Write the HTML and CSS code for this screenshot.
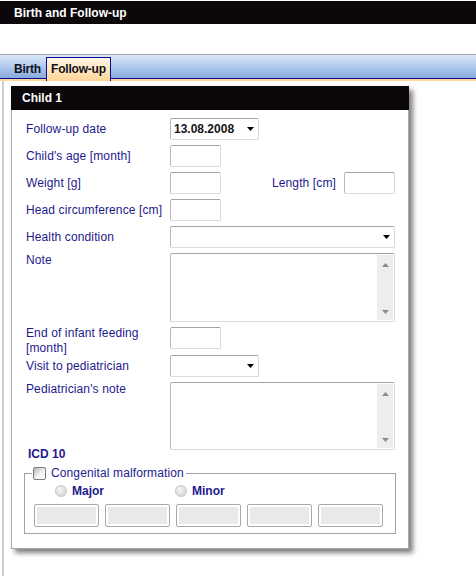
FILE: index.html
```html
<!DOCTYPE html>
<html lang="en">
<head>
    <meta charset="UTF-8">
    <meta name="viewport" content="width=device-width, initial-scale=1.0">
    <title>Birth and Follow-up</title>
    <link rel="stylesheet" href="styles.css">
</head>
<body>
    <div class="titlebar">Birth and Follow-up</div>
    <div class="toolbar"></div>
    <div class="tabbar">
        <span class="tab">Birth</span>
        <span class="tab active">Follow-up</span>
    </div>
    <div class="tabline"></div>

    <div class="content">
        <div class="panel">
            <div class="panel-head">Child 1</div>
            <div class="panel-body">
                <div class="form">
                    <label>Follow-up date</label>
                    <div class="select short">
                        <span class="value">13.08.2008</span>
                        <svg class="arrow" width="7" height="4" viewBox="0 0 7 4"><path d="M0 0h7L3.5 4z"/></svg>
                    </div>

                    <label>Child's age [month]</label>
                    <div><div class="input"></div></div>

                    <label>Weight [g]</label>
                    <div class="pair">
                        <div class="input"></div>
                        <div class="pair-right">
                            <label>Length [cm]</label>
                            <div class="input"></div>
                        </div>
                    </div>

                    <label>Head circumference [cm]</label>
                    <div><div class="input"></div></div>

                    <label>Health condition</label>
                    <div class="select">
                        <span class="value"></span>
                        <svg class="arrow" width="7" height="4" viewBox="0 0 7 4"><path d="M0 0h7L3.5 4z"/></svg>
                    </div>

                    <label class="top">Note</label>
                    <div class="textarea tall">
                        <div class="scroll">
                            <svg width="7" height="4" viewBox="0 0 7 4"><path d="M0 4h7L3.5 0z"/></svg>
                            <svg width="7" height="4" viewBox="0 0 7 4"><path d="M0 0h7L3.5 4z"/></svg>
                        </div>
                    </div>

                    <label class="top two-line">End of infant feeding [month]</label>
                    <div class="input-cell"><div class="input"></div></div>

                    <label>Visit to pediatrician</label>
                    <div class="select short">
                        <span class="value"></span>
                        <svg class="arrow" width="7" height="4" viewBox="0 0 7 4"><path d="M0 0h7L3.5 4z"/></svg>
                    </div>

                    <label class="top">Pediatrician's note</label>
                    <div class="textarea">
                        <div class="scroll">
                            <svg width="7" height="4" viewBox="0 0 7 4"><path d="M0 4h7L3.5 0z"/></svg>
                            <svg width="7" height="4" viewBox="0 0 7 4"><path d="M0 0h7L3.5 4z"/></svg>
                        </div>
                    </div>
                </div>

                <div class="section-title">ICD 10</div>
                <fieldset class="group">
                    <legend><span class="checkbox"></span>Congenital malformation</legend>
                    <div class="radios">
                        <span class="radio-item"><span class="radio"></span>Major</span>
                        <span class="radio-item"><span class="radio"></span>Minor</span>
                    </div>
                    <div class="codes">
                        <div class="code"></div>
                        <div class="code"></div>
                        <div class="code"></div>
                        <div class="code"></div>
                        <div class="code"></div>
                    </div>
                </fieldset>
            </div>
        </div>
    </div>
</body>
</html>
```

FILE: styles.css
```css
* { box-sizing: border-box; }
body { margin: 0; font: 12px "Liberation Sans", Arial, sans-serif; color: #1d1a8c; background: #fff; overflow: hidden; }

/* window header + tabs */
.titlebar { margin-top: 1px; height: 23px; line-height: 24px; padding-left: 14px; background: #0b070a; color: #fff; font-weight: bold; }
.toolbar { height: 31px; border-bottom: 1px solid #a5a5a5; }
.tabbar { display: flex; align-items: flex-end; height: 24px; padding-left: 8px; background: linear-gradient(#dce9fa, #86aadf); border-bottom: 1px solid #0c0c90; }
.tabline { height: 2px; background: #ffd89c; }
.tab { position: relative; height: 24px; margin-bottom: -3px; padding: 0 4px 0 5px; line-height: 23px; font-weight: bold; color: #101018; letter-spacing: -0.2px; border: 1px solid transparent; border-bottom: 0; }
.tab.active { padding: 0 4px; border-color: #0c0c90; background: linear-gradient(#fff6e8, #ffd596); }

.content { height: 495px; margin-left: 2px; border-left: 2px solid #cfcfcf; padding: 5px 0 0 7px; }

/* child panel */
.panel { width: 398px; box-shadow: 4px 4px 5px rgba(0, 0, 0, .5); }
.panel-head { height: 24px; line-height: 24px; padding-left: 11px; background: #0b070a; color: #fff; font-weight: bold; }
.panel-body { background: #fff; border: 1px solid #a8a8a8; border-top: 0; padding: 8px 13px 14px 14px; }

.form { display: grid; grid-template-columns: 144px 225px; row-gap: 5px; align-items: center; }
.form label { line-height: 15px; letter-spacing: 0.12px; }
.form label.top { align-self: start; }
.form label.two-line { margin: -1px 0 -6px; padding-right: 10px; }
.input-cell { align-self: start; }

.input { width: 51px; height: 22px; border: 1px solid; border-color: #a4a4a4 #d6dbe2 #d6dbe2 #b9b9b9; border-radius: 2px; background: #fff; }
.pair { display: flex; justify-content: space-between; align-items: center; }
.pair-right { display: flex; align-items: center; gap: 8px; }

.select { display: flex; align-items: center; justify-content: space-between; height: 22px; padding: 0 4px 0 3px; border: 1px solid; border-color: #a4a4a4 #d6dbe2 #d6dbe2 #b9b9b9; border-radius: 2px; }
.select.short { width: 89px; }
.select .value { font-weight: bold; color: #151515; }
.select .arrow { fill: #000; }

.textarea { display: flex; justify-content: flex-end; height: 68px; padding: 1px; border: 1px solid; border-color: #a4a4a4 #d6dbe2 #d6dbe2 #b9b9b9; border-radius: 2px; }
.textarea.tall { height: 69px; }
.scroll { display: flex; flex-direction: column; justify-content: space-between; align-items: center; width: 16px; padding: 8px 0 6px; background: #ededed; }
.scroll svg { fill: #8c8c8c; }

/* ICD 10 group */
.section-title { margin: -3px 0 0 2px; line-height: 15px; font-weight: bold; }
.group { margin: 4px -1px 0 -2px; padding: 2px 9px 6px; border: 1px solid #a3a3a3; }
.group legend { display: flex; align-items: center; gap: 5px; margin-left: -2px; padding: 0 2px 0 1px; line-height: 15px; letter-spacing: 0.12px; }
.checkbox { width: 13px; height: 13px; border: 1px solid #7c7c7c; border-radius: 2px; background: linear-gradient(135deg, #b4b4b4, #f2f2f2 55%, #fff); }

.radios { display: flex; height: 16px; padding-left: 21px; }
.radio-item { display: flex; align-items: center; gap: 5px; width: 120px; font-weight: bold; }
.radio { width: 12px; height: 12px; border: 1px solid #c6c6c6; border-radius: 50%; background: radial-gradient(circle at 40% 35%, #f6f6f6, #cdcdcd); }

.codes { display: flex; gap: 6px; margin-top: 5px; }
.code { width: 65px; height: 23px; padding: 2px; border: 1px solid #a9a9a9; border-radius: 2px; background: #e9e9e9 content-box; }
```
